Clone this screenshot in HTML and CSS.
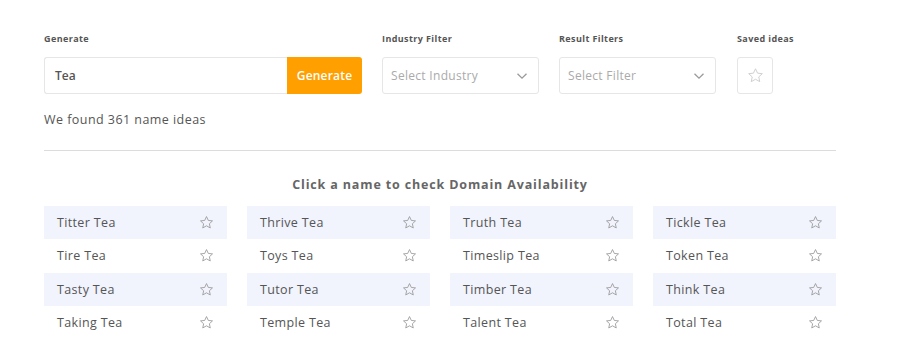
FILE: index.html
```html
<!DOCTYPE html>
<html>
<head>
<meta charset="utf-8">
<link rel="stylesheet" href="styles.css">
</head>
<body>
<div class="page">
  <div class="controls">
    <div class="group group-gen">
      <div class="label">Generate</div>
      <div class="gen-box">
        <div class="gen-input">Tea</div>
        <div class="gen-btn">Generate</div>
      </div>
    </div>
    <div class="group group-sel">
      <div class="label">Industry Filter</div>
      <div class="select"><span>Select Industry</span>
        <svg class="chev" width="12" height="8" viewBox="0 0 12 8"><path d="M1.5 1.8 6 6.2 10.5 1.8" fill="none" stroke="#9a9a9a" stroke-width="1.3"/></svg>
      </div>
    </div>
    <div class="group group-sel">
      <div class="label">Result Filters</div>
      <div class="select"><span>Select Filter</span>
        <svg class="chev" width="12" height="8" viewBox="0 0 12 8"><path d="M1.5 1.8 6 6.2 10.5 1.8" fill="none" stroke="#9a9a9a" stroke-width="1.3"/></svg>
      </div>
    </div>
    <div class="group group-saved">
      <div class="label">Saved ideas</div>
      <div class="saved-box">
        <svg width="17" height="17" viewBox="0 0 24 24"><path d="M12 2.5l2.9 6.2 6.7.7-5 4.6 1.4 6.7L12 17.3l-6 3.4 1.4-6.7-5-4.6 6.7-.7z" fill="none" stroke="#cfcfcf" stroke-width="1.4" stroke-linejoin="round"/></svg>
      </div>
    </div>
  </div>
  <div class="found">We found 361 name ideas</div>
  <div class="divider"></div>
  <div class="heading">Click a name to check Domain Availability</div>
  <div class="grid">
    <div class="col">
      <div class="item alt"><span>Titter Tea</span><svg class="star" viewBox="0 0 24 24"><path d="M12 2.5l2.9 6.2 6.7.7-5 4.6 1.4 6.7L12 17.3l-6 3.4 1.4-6.7-5-4.6 6.7-.7z"/></svg></div>
      <div class="item"><span>Tire Tea</span><svg class="star" viewBox="0 0 24 24"><path d="M12 2.5l2.9 6.2 6.7.7-5 4.6 1.4 6.7L12 17.3l-6 3.4 1.4-6.7-5-4.6 6.7-.7z"/></svg></div>
      <div class="item alt"><span>Tasty Tea</span><svg class="star" viewBox="0 0 24 24"><path d="M12 2.5l2.9 6.2 6.7.7-5 4.6 1.4 6.7L12 17.3l-6 3.4 1.4-6.7-5-4.6 6.7-.7z"/></svg></div>
      <div class="item"><span>Taking Tea</span><svg class="star" viewBox="0 0 24 24"><path d="M12 2.5l2.9 6.2 6.7.7-5 4.6 1.4 6.7L12 17.3l-6 3.4 1.4-6.7-5-4.6 6.7-.7z"/></svg></div>
    </div>
    <div class="col">
      <div class="item alt"><span>Thrive Tea</span><svg class="star" viewBox="0 0 24 24"><path d="M12 2.5l2.9 6.2 6.7.7-5 4.6 1.4 6.7L12 17.3l-6 3.4 1.4-6.7-5-4.6 6.7-.7z"/></svg></div>
      <div class="item"><span>Toys Tea</span><svg class="star" viewBox="0 0 24 24"><path d="M12 2.5l2.9 6.2 6.7.7-5 4.6 1.4 6.7L12 17.3l-6 3.4 1.4-6.7-5-4.6 6.7-.7z"/></svg></div>
      <div class="item alt"><span>Tutor Tea</span><svg class="star" viewBox="0 0 24 24"><path d="M12 2.5l2.9 6.2 6.7.7-5 4.6 1.4 6.7L12 17.3l-6 3.4 1.4-6.7-5-4.6 6.7-.7z"/></svg></div>
      <div class="item"><span>Temple Tea</span><svg class="star" viewBox="0 0 24 24"><path d="M12 2.5l2.9 6.2 6.7.7-5 4.6 1.4 6.7L12 17.3l-6 3.4 1.4-6.7-5-4.6 6.7-.7z"/></svg></div>
    </div>
    <div class="col">
      <div class="item alt"><span>Truth Tea</span><svg class="star" viewBox="0 0 24 24"><path d="M12 2.5l2.9 6.2 6.7.7-5 4.6 1.4 6.7L12 17.3l-6 3.4 1.4-6.7-5-4.6 6.7-.7z"/></svg></div>
      <div class="item"><span>Timeslip Tea</span><svg class="star" viewBox="0 0 24 24"><path d="M12 2.5l2.9 6.2 6.7.7-5 4.6 1.4 6.7L12 17.3l-6 3.4 1.4-6.7-5-4.6 6.7-.7z"/></svg></div>
      <div class="item alt"><span>Timber Tea</span><svg class="star" viewBox="0 0 24 24"><path d="M12 2.5l2.9 6.2 6.7.7-5 4.6 1.4 6.7L12 17.3l-6 3.4 1.4-6.7-5-4.6 6.7-.7z"/></svg></div>
      <div class="item"><span>Talent Tea</span><svg class="star" viewBox="0 0 24 24"><path d="M12 2.5l2.9 6.2 6.7.7-5 4.6 1.4 6.7L12 17.3l-6 3.4 1.4-6.7-5-4.6 6.7-.7z"/></svg></div>
    </div>
    <div class="col">
      <div class="item alt"><span>Tickle Tea</span><svg class="star" viewBox="0 0 24 24"><path d="M12 2.5l2.9 6.2 6.7.7-5 4.6 1.4 6.7L12 17.3l-6 3.4 1.4-6.7-5-4.6 6.7-.7z"/></svg></div>
      <div class="item"><span>Token Tea</span><svg class="star" viewBox="0 0 24 24"><path d="M12 2.5l2.9 6.2 6.7.7-5 4.6 1.4 6.7L12 17.3l-6 3.4 1.4-6.7-5-4.6 6.7-.7z"/></svg></div>
      <div class="item alt"><span>Think Tea</span><svg class="star" viewBox="0 0 24 24"><path d="M12 2.5l2.9 6.2 6.7.7-5 4.6 1.4 6.7L12 17.3l-6 3.4 1.4-6.7-5-4.6 6.7-.7z"/></svg></div>
      <div class="item"><span>Total Tea</span><svg class="star" viewBox="0 0 24 24"><path d="M12 2.5l2.9 6.2 6.7.7-5 4.6 1.4 6.7L12 17.3l-6 3.4 1.4-6.7-5-4.6 6.7-.7z"/></svg></div>
    </div>
  </div>
</div>
</body>
</html>
```

FILE: styles.css
```css
* { box-sizing: border-box; }
html, body { margin: 0; padding: 0; background: #fff; }
body {
  font-family: "Open Sans", "Liberation Sans", sans-serif;
  color: #555;
  width: 900px;
  height: 340px;
  overflow: hidden;
}
.page {
  padding: 33px 0 0 44px;
  width: 836px;
}
.controls {
  display: flex;
  align-items: flex-start;
}
.group { display: flex; flex-direction: column; }
.group-gen { width: 318px; margin-right: 20px; }
.group-sel { width: 157px; margin-right: 20px; }
.group-sel + .group-sel { margin-right: 21px; }
.group-saved { width: 80px; }
.label {
  font-size: 9px;
  font-weight: 700;
  color: #555;
  letter-spacing: 0.4px;
  line-height: 12px;
  height: 12px;
  margin-bottom: 12px;
}
.gen-box {
  display: flex;
  height: 37px;
}
.gen-input {
  flex: 1;
  border: 1px solid #e6e6e6;
  border-right: none;
  border-radius: 3px 0 0 3px;
  font-size: 12px;
  font-weight: 600;
  color: #555;
  display: flex;
  align-items: center;
  padding-left: 10px;
}
.gen-btn {
  width: 75px;
  background: #ff9f00;
  color: #fff;
  font-size: 12px;
  font-weight: 600;
  letter-spacing: 0.2px;
  display: flex;
  align-items: center;
  justify-content: center;
  border-radius: 0 3px 3px 0;
}
.select {
  height: 37px;
  border: 1px solid #e6e6e6;
  border-radius: 3px;
  display: flex;
  align-items: center;
  justify-content: space-between;
  padding: 0 10px 0 8px;
  font-size: 12px;
  color: #aaa;
  letter-spacing: 0.3px;
}
.chev { display: block; }
.saved-box {
  width: 36px;
  height: 37px;
  border: 1px solid #e6e6e6;
  border-radius: 3px;
  display: flex;
  align-items: center;
  justify-content: center;
}
.found {
  margin-top: 17px;
  font-size: 12.5px;
  color: #555;
  letter-spacing: 0.45px;
  line-height: 18px;
}
.divider {
  margin-top: 21px;
  width: 792px;
  height: 1px;
  background: #dcdcdc;
}
.heading {
  width: 792px;
  text-align: center;
  margin-top: 25px;
  font-size: 12.5px;
  font-weight: 700;
  color: #666;
  letter-spacing: 0.85px;
  line-height: 18px;
}
.grid {
  margin-top: 12px;
  width: 792px;
  display: grid;
  grid-template-columns: repeat(4, 183px);
  column-gap: 20px;
}
.item {
  height: 33.25px;
  display: flex;
  align-items: center;
  justify-content: space-between;
  padding: 0 13px 0 13px;
  font-size: 12.5px;
  color: #555;
  letter-spacing: 0.35px;
}
.item.alt { background: #f1f3fd; }
.star {
  width: 15px;
  height: 15px;
  fill: none;
  stroke: #9a9a9a;
  stroke-width: 1.4;
  stroke-linejoin: round;
}
```
